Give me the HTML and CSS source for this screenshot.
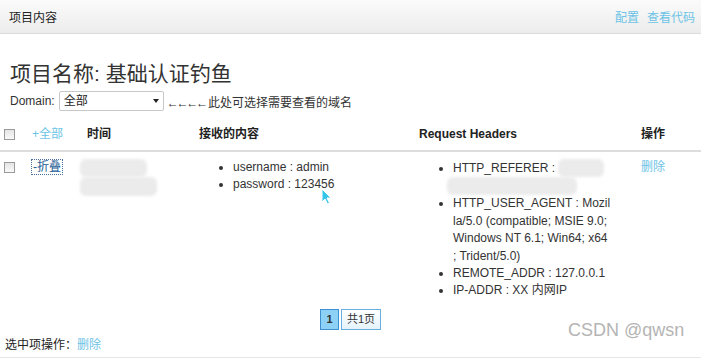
FILE: index.html
```html
<!DOCTYPE html>
<html lang="zh-CN">
<head>
    <meta charset="UTF-8">
    <title>项目内容</title>
    <link rel="stylesheet" href="styles.css">
</head>
<body>
    <header class="topbar">
        <span class="topbar-title">项目内容</span>
        <nav class="topbar-links">
            <a href="#">配置</a>
            <a href="#">查看代码</a>
        </nav>
    </header>

    <main class="content">
        <h1 class="project-title">项目名称: 基础认证钓鱼</h1>

        <div class="domain-row">
            <label for="domain">Domain:</label>
            <span class="select-wrap">
                <select id="domain"><option>全部</option></select>
            </span>
            <span class="hint"><span class="arrows">←←←←</span>此处可选择需要查看的域名</span>
        </div>

        <table class="records">
            <colgroup>
                <col class="col-check">
                <col class="col-toggle">
                <col class="col-time">
                <col class="col-content">
                <col class="col-headers">
                <col class="col-action">
            </colgroup>
            <thead>
                <tr>
                    <th><input type="checkbox" class="check"></th>
                    <th class="plain"><a href="#" class="link">+全部</a></th>
                    <th>时间</th>
                    <th>接收的内容</th>
                    <th>Request Headers</th>
                    <th>操作</th>
                </tr>
            </thead>
            <tbody>
                <tr>
                    <td><input type="checkbox" class="check"></td>
                    <td><a href="#" class="fold">-折叠</a></td>
                    <td>
                        <div class="blur blur-time1"></div>
                        <div class="blur blur-time2"></div>
                    </td>
                    <td>
                        <ul class="kv-list">
                            <li>username : admin</li>
                            <li>password : 123456</li>
                        </ul>
                    </td>
                    <td>
                        <ul class="kv-list headers-list">
                            <li>HTTP_REFERER : <span class="blur blur-ref1"></span><span class="blur blur-ref2"></span></li>
                            <li>HTTP_USER_AGENT : Mozil<br>la/5.0 (compatible; MSIE 9.0;<br>Windows NT 6.1; Win64; x64<br>; Trident/5.0)</li>
                            <li>REMOTE_ADDR : 127.0.0.1</li>
                            <li>IP-ADDR : XX 内网IP</li>
                        </ul>
                    </td>
                    <td><a href="#" class="link">删除</a></td>
                </tr>
            </tbody>
        </table>

        <div class="pager">
            <span class="page current">1</span>
            <span class="page">共1页</span>
        </div>

        <div class="batch">选中项操作：<a href="#" class="link">删除</a></div>
    </main>

    <!-- screenshot overlays -->
    <svg class="cursor" width="11" height="17" viewBox="0 0 11 17">
        <path d="M1 1 L1 14 L4 11 L6.5 16 L8.5 15 L6 10 L10 10 Z" fill="#35c6e8" stroke="#ffffff" stroke-width="1"/>
    </svg>
    <div class="watermark">CSDN @qwsn</div>
</body>
</html>
```

FILE: styles.css
```css
:root {
    --text-color: #333333;
    --link-color: #6cc3e6;
    --line-color: #dddddd;
    --blur-color: #ebebeb;
}

* {
    margin: 0;
    padding: 0;
    box-sizing: border-box;
}

body {
    font-family: "Liberation Sans", Arial, "Noto Sans CJK SC", sans-serif;
    font-size: 12px;
    color: var(--text-color);
    background-color: #ffffff;
    width: 701px;
    height: 358px;
    overflow: hidden;
    position: relative;
}

a {
    text-decoration: none;
}

.link {
    color: var(--link-color);
}

/* top bar */
.topbar {
    height: 34px;
    display: flex;
    justify-content: space-between;
    align-items: center;
    padding: 0 6px 0 9px;
    background: linear-gradient(#fbfbfb, #ececec);
    border-bottom: 1px solid #dcdcdc;
}

.topbar-title {
    font-size: 12px;
    color: #222222;
}

.topbar-links {
    display: flex;
    gap: 8px;
}

.topbar-links a {
    color: var(--link-color);
}

/* title + domain */
.project-title {
    font-size: 21px;
    line-height: 23px;
    font-weight: normal;
    color: #333333;
    margin: 28px 0 0 10px;
}

.domain-row {
    display: flex;
    align-items: center;
    height: 20px;
    margin: 6px 0 0 10px;
}

.domain-row label {
    margin-right: 4px;
}

.select-wrap {
    position: relative;
    display: inline-block;
}

.select-wrap select {
    appearance: none;
    width: 105px;
    height: 20px;
    padding: 0 4px;
    font-family: inherit;
    font-size: 12px;
    color: #222222;
    background: #ffffff;
    border: 1px solid #c8c8c8;
    border-radius: 2px;
}

.select-wrap::after {
    content: "";
    position: absolute;
    right: 5px;
    top: 8px;
    border-left: 3px solid transparent;
    border-right: 3px solid transparent;
    border-top: 4px solid #222222;
}

.hint {
    margin-left: 3px;
    color: #333333;
}

.arrows {
    letter-spacing: -2.2px;
    margin-right: 2px;
}

/* table */
.records {
    width: 701px;
    table-layout: fixed;
    border-collapse: collapse;
    margin-top: 8px;
}

.col-check { width: 28px; }
.col-toggle { width: 55px; }
.col-time { width: 112px; }
.col-content { width: 220px; }
.col-headers { width: 222px; }
.col-action { width: 64px; }

.records th {
    text-align: left;
    font-weight: bold;
    color: #222222;
    line-height: 17px;
    padding: 7px 4px;
    border-bottom: 2px solid var(--line-color);
}

.records th.plain {
    font-weight: normal;
}

.records td {
    vertical-align: top;
    line-height: 17.4px;
    padding: 7px 4px 4px;
}

.check {
    appearance: none;
    display: block;
    width: 11px;
    height: 11px;
    border: 1px solid #9a9a9a;
    background: linear-gradient(#e4e4e4, #fafafa);
}

.records td .check {
    margin-top: 3px;
}

.fold {
    color: #245d95;
    outline: 1px dotted #4a6f99;
    padding: 0 1px;
}

.kv-list {
    padding-left: 34px;
    list-style: disc;
}

.headers-list {
    width: 170px;
    padding-left: 0;
    margin-left: 34px;
    word-break: break-all;
}

/* blurred (masked) values */
.blur {
    display: block;
    background-color: var(--blur-color);
    border-radius: 6px;
    filter: blur(1.5px);
}

.blur-time1 {
    width: 67px;
    height: 18px;
    margin-left: -7px;
}

.blur-time2 {
    width: 77px;
    height: 19px;
    margin-left: -7px;
}

.blur-ref1 {
    display: inline-block;
    width: 46px;
    height: 18px;
    vertical-align: -5px;
}

.blur-ref2 {
    width: 130px;
    height: 18px;
    margin-left: -6px;
}

/* pager */
.pager {
    display: flex;
    justify-content: center;
    gap: 2px;
    margin-top: 5px;
}

.page {
    height: 21px;
    line-height: 19px;
    padding: 0 5px;
    font-size: 11px;
    color: #333333;
    border: 1px solid #6aaee0;
    background: linear-gradient(#ffffff, #e4f3fc);
}

.page.current {
    width: 19px;
    padding: 0;
    text-align: center;
    font-weight: bold;
    border-color: #3f90d0;
    background: #8dd2f6;
}

/* bottom */
.batch {
    margin-top: 7px;
    padding: 0 0 3px 5px;
    line-height: 17px;
    color: #222222;
    border-bottom: 1px solid #e6e6e6;
}

.cursor {
    position: absolute;
    left: 321px;
    top: 188px;
}

.watermark {
    position: absolute;
    left: 568px;
    top: 320px;
    font-size: 18px;
    color: #b4b4b4;
}
```
